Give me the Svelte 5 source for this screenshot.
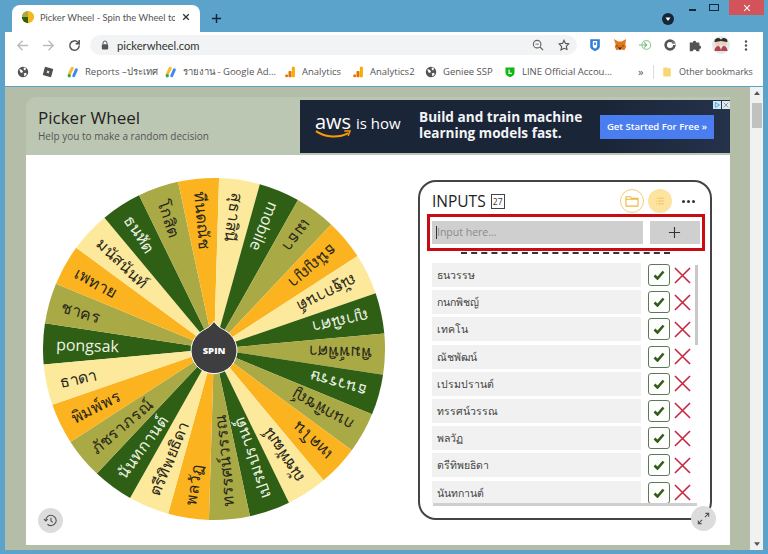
<script>
  const cx = 171, cy = 171, R = 171;
  const colors = { d: '#2f5f14', o: '#a9a945', y: '#fbb41f', p: '#fde99b' };
  const names = [
    ['pongsak','d'],['ชาคร','o'],['เพทาย','y'],['มนัสนันท์','p'],['ธนหัต','d'],['โกสิต','o'],['ทีนดณัช','y'],['สุธาสินี','p'],
    ['mobile','d'],['เมธา','o'],['ธนัญญา','y'],['ณัฐกานต์','p'],['ญาณิศา','d'],['พิมพ์พิศา','o'],['ธนวรรษ','d'],['กนกพิชญ์','o'],
    ['เทคโน','y'],['ณัชพัฒน์','p'],['เปรมปรานต์','d'],['ทรรศน์วรรณ','o'],['พลวัฏ','y'],['ตรีทิพยธิดา','p'],['นันทกานต์','d'],
    ['ภัชราภรณ์','o'],['พิมพ์พร','y'],['ธาดา','p']
  ];
  const step = 360 / names.length, start = 1.7;
  const pt = (deg) => {
    const a = (deg * Math.PI) / 180;
    return [cx - R * Math.cos(a), cy - R * Math.sin(a)];
  };
  const wedges = names.map(([label, c], i) => {
    const mid = start + i * step;
    const [x1, y1] = pt(mid - step / 2);
    const [x2, y2] = pt(mid + step / 2);
    return { label, mid, fill: colors[c], text: c === 'd' ? '#eef3e6' : '#26261a',
      d: `M${cx} ${cy}L${x1.toFixed(2)} ${y1.toFixed(2)}A${R} ${R} 0 0 1 ${x2.toFixed(2)} ${y2.toFixed(2)}Z` };
  });
  const rows = ['ธนวรรษ','กนกพิชญ์','เทคโน','ณัชพัฒน์','เปรมปรานต์','ทรรศน์วรรณ','พลวัฏ','ตรีทิพยธิดา','นันทกานต์'];
</script>

{#snippet ads()}
  <svg class="bmi" viewBox="0 0 16 16"><path d="M7 3 3 11" stroke="#f4bd2b" stroke-width="4" stroke-linecap="round"/><path d="M12.500 5 9 13" stroke="#4285f4" stroke-width="4" stroke-linecap="round"/><circle cx="3" cy="13" r="2.200" fill="#34a853"/></svg>
{/snippet}
{#snippet analytics()}
  <svg class="bmi" viewBox="0 0 16 16"><rect x="10.500" y="1" width="4" height="14" rx="1" fill="#f9ab00"/><rect x="6" y="6.500" width="4" height="8.500" rx="1" fill="#e37400"/><circle cx="3.500" cy="13" r="2" fill="#e37400"/></svg>
{/snippet}
{#snippet globe()}
  <svg class="bmi" viewBox="0 0 16 16"><circle cx="8" cy="8" r="7" fill="#555"/><path d="M3 4l3 1 2 2-1 2-2 0-1-2zM9 2l3 1-1 3-2-1zM9 10l3-1 1 2-3 3z" fill="#fff"/></svg>
{/snippet}

<div class="window">
  <div class="strip">
    <div class="tab">
      <svg class="fav" viewBox="0 0 16 16"><circle cx="8" cy="8" r="7" fill="#f5b920"/><path d="M8 8 1 8a7 7 0 0 0 7 7z" fill="#2f5f14"/><path d="M8 8V1a7 7 0 0 0-7 7z" fill="#a9a945"/></svg>
      <span class="tabtitle">Picker Wheel - Spin the Wheel to</span>
      <svg class="tabx" viewBox="0 0 10 10"><path d="M1.500 1.500l7 7M8.500 1.500l-7 7" stroke="#333" stroke-width="1.600"/></svg>
    </div>
    <svg class="newtab" viewBox="0 0 12 12"><path d="M6 1v10M1 6h10" stroke="#12263a" stroke-width="1.600"/></svg>
    <div class="wincontrols">
      <svg class="badge" viewBox="0 0 12 12"><circle cx="6" cy="6" r="6" fill="#14273a"/><path d="M3.500 4.500h5L6 8z" fill="#fff"/></svg>
      <span class="min"></span>
      <span class="max"></span>
      <span class="close"><svg viewBox="0 0 10 10"><path d="M1.500 1.500l7 7M8.500 1.500l-7 7" stroke="#fff" stroke-width="1.300"/></svg></span>
    </div>
  </div>

  <div class="chrome">
    <div class="toolbar">
      <svg class="navi first" viewBox="0 0 16 16"><path d="M14 8H3M8 3 3 8l5 5" fill="none" stroke="#b8bcc0" stroke-width="1.500"/></svg>
      <svg class="navi" viewBox="0 0 16 16"><path d="M2 8h11M8 3l5 5-5 5" fill="none" stroke="#b8bcc0" stroke-width="1.500"/></svg>
      <svg class="navi" viewBox="0 0 16 16"><path d="M13 8a5 5 0 1 1-1.500-3.500L13 6V2M13 6H9.200" fill="none" stroke="#555" stroke-width="1.600"/></svg>
      <div class="url">
        <svg class="lock" viewBox="0 0 10 12"><path d="M2.500 5V3.500a2.500 2.500 0 0 1 5 0V5" fill="none" stroke="#555" stroke-width="1.200"/><rect x="1" y="5" width="8" height="6.500" rx="1" fill="#555"/></svg>
        <span class="addr">pickerwheel.com</span>
        <svg class="urlicon zoomi" viewBox="0 0 14 14"><circle cx="6" cy="6" r="4.400" fill="none" stroke="#666" stroke-width="1.300"/><path d="M9.300 9.300 13 13" stroke="#666" stroke-width="1.400"/><path d="M4 6h4" stroke="#666"/></svg>
        <svg class="urlicon star" viewBox="0 0 14 14"><path d="M7 1.500l1.700 3.600 3.900.5-2.900 2.700.8 3.900L7 10.800l-3.500 1.900.8-3.900L1.400 5.600l3.900-.5z" fill="none" stroke="#555" stroke-width="1.300"/></svg>
      </div>
      <div class="exts">
        <svg class="ext" viewBox="0 0 16 16"><path d="M2.500 1.500h11v8c0 3-3 4.500-5.500 5.500-2.500-1-5.500-2.500-5.500-5.500z" fill="#2f7fd6"/><path d="M5.500 3.500h5v5.500c0 1.500-1.500 2.500-2.500 3-1-.5-2.500-1.500-2.500-3z" fill="#fff"/><path d="M7 5h2v3H7z" fill="#2f7fd6"/></svg>
        <svg class="ext" viewBox="0 0 16 16"><path d="M1 1l5 3h4l5-3-1 6 1 3-2 4-3-1H7l-3 1-2-4 1-3z" fill="#e2761b"/><path d="M6 10l2 1 2-1-1 3H7z" fill="#2a2a2a"/><path d="M4 8l2 1-2 1zM12 8l-2 1 2 1z" fill="#5a3a1a"/></svg>
        <svg class="ext" viewBox="0 0 16 16"><circle cx="9.500" cy="8" r="5" fill="none" stroke="#9ccf9c" stroke-width="1.300"/><path d="M1 8h9M7 5l3 3-3 3" fill="none" stroke="#7cbd7c" stroke-width="1.300"/></svg>
        <svg class="ext" viewBox="0 0 16 16"><circle cx="8" cy="8" r="5" fill="none" stroke="#555" stroke-width="3"/><path d="M8 8l6-5v5z" fill="#fff"/><circle cx="12" cy="5" r="1.800" fill="#777"/></svg>
        <svg class="ext" viewBox="0 0 16 16"><path d="M2 5h3.500a2 2 0 1 1 4 0H13v3.500a2 2 0 1 1 0 4V15H9.500a2 2 0 1 0-4 0H2z" fill="#555"/></svg>
        <svg class="avatar" viewBox="0 0 18 18"><circle cx="9" cy="9" r="9" fill="#dfe8ea"/><circle cx="6" cy="7" r="3" fill="#f1cdb7"/><circle cx="12" cy="7" r="3" fill="#f1cdb7"/><path d="M3 6a3 3 0 0 1 6-1M9 5a3 3 0 0 1 6 1" fill="#2b2b2b" stroke="#2b2b2b"/><path d="M2.500 15c0-3 2-5 3.500-5s3 2 3 5zM9 15c0-3 1.500-5 3-5s3.500 2 3.500 5z" fill="#b5434d"/></svg>
        <svg class="dots" viewBox="0 0 4 16"><circle cx="2" cy="3" r="1.500" fill="#555"/><circle cx="2" cy="8" r="1.500" fill="#555"/><circle cx="2" cy="13" r="1.500" fill="#555"/></svg>
      </div>
    </div>
    <div class="bookmarks">
      <span class="bm w1">{@render globe()}</span>
      <span class="bm w2"><svg class="bmi" viewBox="0 0 16 16"><path d="M4 1l11 3-3 11L1 12z" fill="#4d4d4d"/><path d="M7 6l3 1-1 3-3-1z" fill="#ddd"/></svg></span>
      <span class="bm w3">{@render ads()}<span>Reports –ประเทศ</span></span>
      <span class="bm w4">{@render ads()}<span>รายงาน - Google Ad...</span></span>
      <span class="bm w5">{@render analytics()}<span>Analytics</span></span>
      <span class="bm w6">{@render analytics()}<span>Analytics2</span></span>
      <span class="bm w7">{@render globe()}<span>Geniee SSP</span></span>
      <span class="bm w8"><svg class="bmi" viewBox="0 0 16 16"><path d="M2 2h12v7c0 3-3 5-6 6-3-1-6-3-6-6z" fill="#12b812"/><path d="M6 4.500v6h4.500V9H7.500V4.500z" fill="#fff"/></svg><span>LINE Official Accou...</span></span>
      <span class="more">»</span>
      <span class="sep"></span>
      <span class="bm other"><svg class="bmi" viewBox="0 0 16 16"><path d="M3 2h5l1 1h4v11H3z" fill="#f7d774"/></svg><span>Other bookmarks</span></span>
    </div>
  </div>

  <div class="viewport">
    <div class="page">
      <div class="head">
        <div class="brand">
          <h1>Picker Wheel</h1>
          <p>Help you to make a random decision</p>
        </div>
        <div class="ad">
          <div class="aws">
            <span class="awsword">aws</span>
            <svg class="smile" viewBox="0 0 38 8"><path d="M1 1c10 7 24 7 33 2" fill="none" stroke="#f90" stroke-width="2"/><path d="M30 1l6 0-2 5" fill="none" stroke="#f90" stroke-width="1.500"/></svg>
          </div>
          <span class="ishow">is how</span>
          <span class="pitch">Build and train machine<br />learning models fast.</span>
          <span class="cta">Get Started For Free »</span>
          <span class="adchoices">
            <svg viewBox="0 0 10 10"><rect width="10" height="10" fill="#cfe6f5"/><path d="M3 2l5 3-5 3z" fill="none" stroke="#3a9ad9"/></svg>
            <svg viewBox="0 0 10 10"><rect width="10" height="10" fill="#e8e8e8"/><path d="M2 2l6 6M8 2l-6 6" stroke="#4a90c0"/></svg>
          </span>
        </div>
      </div>
      <div class="main">
        <div class="wheelwrap">
          <svg class="wheel" viewBox="0 0 342 342">
            {#each wedges as w}
              <path d={w.d} fill={w.fill} />
            {/each}
            {#each wedges as w}
              <text x={cx - 158} y={cy} transform={`rotate(${w.mid.toFixed(2)} ${cx} ${cy})`} fill={w.text} class="label">{w.label}</text>
            {/each}
            <path d="M171 143c3 6 9 8 12 10a23 23 0 1 1-24 0c3-2 9-4 12-10z" fill="#3e3d40" stroke="#fff" stroke-width="1" />
            <text x={cx} y={cy + 1} class="spin">SPIN</text>
          </svg>
          <button class="round history" aria-label="history">
            <svg viewBox="0 0 16 16"><path d="M3 8a5.500 5.500 0 1 1 1.800 4" fill="none" stroke="#555" stroke-width="1.200"/><path d="M1 6.500l2 2 2-2" fill="none" stroke="#555" stroke-width="1.200"/><path d="M8.500 5v3.500l2 1.500" fill="none" stroke="#555" stroke-width="1.200"/></svg>
          </button>
        </div>
        <section class="inputs">
          <div class="ptitle">
            <h2>INPUTS</h2>
            <span class="count">27</span>
            <span class="circle folder"><svg viewBox="0 0 16 14"><path d="M1 2h5l1.500 2H15v9H1zM1 5h14" fill="none" stroke="#eeb93a" stroke-width="1.300"/></svg></span>
            <span class="circle listi"><svg viewBox="0 0 12 10"><path d="M3.500 1.500H11M3.500 5H11M3.500 8.500H11M1 1.500h1M1 5h1M1 8.500h1" stroke="#eebc4c" stroke-width="1"/></svg></span>
            <span class="more3"><i></i><i></i><i></i></span>
          </div>
          <div class="redbox">
            <div class="field"><span class="caret"></span>Input here...</div>
            <div class="add"><svg viewBox="0 0 14 14"><path d="M7 1v12M1 7h12" stroke="#333" stroke-width="1.200"/></svg></div>
          </div>
          <div class="dash"></div>
          <div class="listarea">
            <div class="rows">
              {#each rows as r}
                <div class="row">
                  <span class="name">{r}</span>
                  <span class="chk"><svg viewBox="0 0 12 10"><path d="M1.500 5.500 4.500 8.500 10.500 1.500" fill="none" stroke="#2f5f14" stroke-width="2.600"/></svg></span>
                  <svg class="del" viewBox="0 0 18 18"><path d="M1 1l16 16M17 1 1 17" stroke="#c9263f" stroke-width="1.700"/></svg>
                </div>
              {/each}
            </div>
            <div class="vscroll"></div>
          </div>
          <div class="hscroll"></div>
          <button class="round expand" aria-label="expand">
            <svg viewBox="0 0 16 16"><path d="M9.500 6.500 13.500 2.500M10 2.500h3.500V6M6.500 9.500 2.500 13.500M2.500 10v3.500H6" fill="none" stroke="#555" stroke-width="1.200"/></svg>
          </button>
        </section>
      </div>
    </div>
    <div class="scrollbar">
      <svg class="sarrow" viewBox="0 0 8 5"><path d="M4 0l4 5H0z" fill="#555"/></svg>
      <div class="thumb"></div>
      <svg class="sarrow down" viewBox="0 0 8 5"><path d="M0 0h8L4 5z" fill="#555"/></svg>
    </div>
  </div>
</div>

<style>
  :global(body) { margin: 0; background: #5ba3cb; }
  .window { width: 768px; height: 554px; overflow: hidden; display: flex; flex-direction: column; font-family: "Open Sans", "Noto Sans", "DejaVu Sans", sans-serif; color: #333; }
  svg { display: block; flex: none; }

  .strip { height: 32px; display: flex; align-items: flex-end; padding-left: 12px; position: relative; flex: none; }
  .tab { width: 188px; height: 27px; background: #fff; border-radius: 8px 8px 0 0; display: flex; align-items: center; padding: 0 8px 3px 9px; box-sizing: border-box; }
  .fav { width: 14px; height: 14px; margin-right: 5px; }
  .tabtitle { font-family: Lato, "Open Sans", sans-serif; font-size: 9.400px; color: #555; flex: 1; white-space: nowrap; overflow: hidden; }
  .tabx { width: 8px; height: 8px; margin-left: 7px; margin-right: 2px; }
  .newtab { width: 11px; height: 11px; margin: 0 0 8px 11px; }
  .wincontrols { margin-left: auto; align-self: flex-start; display: flex; }
  .badge { width: 12px; height: 12px; margin: 13px 15px 0 0; }
  .min { width: 7px; height: 2px; background: #14273a; margin: 9px 13px 0 0; }
  .max { width: 8px; height: 5px; border: 1.500px solid #14273a; margin: 4px 10px 0 0; }
  .close { width: 35px; height: 15px; background: #d2545a; display: flex; align-items: center; justify-content: center; margin-right: 4px; }
  .close svg { width: 8px; height: 8px; }

  .chrome { margin: 0 5px; background: #fff; flex: none; height: 54px; }
  .toolbar { height: 26px; display: flex; align-items: center; }
  .navi { width: 15px; height: 15px; margin-right: 11px; }
  .navi.first { margin-left: 10px; }
  .url { width: 487px; height: 20px; margin-left: -3px; background: #f1f3f4; border-radius: 10px; display: flex; align-items: center; padding: 0 6px 0 11px; box-sizing: border-box; }
  .lock { width: 8px; height: 10px; margin-right: 8px; }
  .addr { font-family: Lato, "Open Sans", sans-serif; font-size: 11.200px; color: #333; flex: 1; }
  .urlicon { width: 12px; height: 12px; }
  .zoomi { margin-right: 14px; }
  .star { margin-right: 1px; }
  .exts { display: flex; align-items: center; margin-left: 11px; }
  .ext { width: 14px; height: 14px; margin-right: 11px; }
  .avatar { width: 18px; height: 18px; margin: 0 14px 0 -1px; }
  .dots { width: 4px; height: 13px; }

  .bookmarks { height: 27px; display: flex; align-items: center; padding-left: 12px; font-size: 9.500px; color: #555; white-space: nowrap; }
  .bm { display: flex; align-items: center; gap: 6px; }
  .bmi { width: 12px; height: 12px; }
  .w1 { width: 25px; } .w2 { width: 25px; } .w3 { width: 98px; } .w4 { width: 119px; } .w5 { width: 68px; } .w6 { width: 73px; } .w7 { width: 79px; } .w8 { width: 134px; }
  .more { font-size: 11px; width: 15px; color: #555; }
  .sep { width: 1px; height: 14px; background: #ddd; margin-right: 7px; }
  .other { font-size: 9px; }

  .viewport { flex: none; height: 463px; margin: 1px 5px 0; display: flex; }
  .page { width: 745px; height: 463px; background: #b3bda8; padding: 10px 21px 0; box-sizing: border-box; }
  .head { height: 58px; display: flex; background: #bcc7b3; border-radius: 10px 0 0 0; width: 704px; padding: 3px 0 2px; box-sizing: border-box; }
  .brand { width: 274px; padding: 8px 0 0 12px; box-sizing: border-box; }
  h1 { font-size: 17px; font-weight: 400; line-height: 20px; margin: 0; color: #222; }
  .brand p { margin: 2px 0 0; font-size: 10px; line-height: 13px; color: #555; }
  .ad { width: 430px; height: 53px; background: linear-gradient(90deg, #1b2538 70%, #24324a); display: flex; align-items: center; position: relative; color: #fff; }
  .aws { margin-left: 15px; width: 38px; margin-top: -4px; }
  .awsword { font-size: 20px; line-height: 20px; display: block; }
  .smile { width: 37px; height: 8px; margin-top: -2px; }
  .ishow { font-size: 15px; margin-left: 3px; width: 63px; margin-top: -8px; }
  .pitch { font-size: 13.600px; font-weight: 700; line-height: 16px; width: 181px; margin-top: -4px; white-space: nowrap; color: #f3f4f6; }
  .cta { width: 114px; height: 24px; background: #4a7ef0; font-size: 9.500px; font-weight: 600; line-height: 24px; text-align: center; white-space: nowrap; }
  .adchoices { position: absolute; top: 1px; right: 0; display: flex; gap: 1px; }
  .adchoices svg { width: 8px; height: 8px; }

  .main { width: 704px; height: 390px; background: #fff; display: flex; }
  .wheelwrap { width: 392px; position: relative; padding: 23px 0 0 17px; box-sizing: border-box; }
  .wheel { width: 342px; height: 342px; }
  .label { font-family: "Open Sans", "Noto Sans", sans-serif; font-size: 16px; dominant-baseline: central; }
  .spin { font-family: "Open Sans", sans-serif; font-size: 9.500px; font-weight: 800; fill: #fff; text-anchor: middle; dominant-baseline: central; }
  .round { position: absolute; width: 25px; height: 25px; border-radius: 50%; background: #dcdcdc; border: 0; padding: 0; display: flex; align-items: center; justify-content: center; }
  .round svg { width: 15px; height: 15px; }
  .history { left: 12px; top: 353px; }

  .inputs { margin-top: 25px; width: 294px; height: 340px; border: 2px solid #444; border-radius: 18px; box-sizing: border-box; position: relative; }
  .ptitle { height: 32px; display: flex; align-items: center; padding: 6px 0 0 12px; box-sizing: border-box; }
  h2 { margin: 0; font-size: 15.500px; font-weight: 400; color: #222; }
  .count { margin-left: 5px; width: 12px; height: 13px; border: 1px solid #444; font-size: 8.500px; line-height: 13px; text-align: center; }
  .circle { width: 24px; height: 24px; border-radius: 50%; display: flex; align-items: center; justify-content: center; box-sizing: border-box; }
  .folder { margin-left: 115px; border: 1px solid #f2cf78; }
  .folder svg { width: 14px; height: 12px; }
  .listi { margin-left: 4px; background: #fde3a0; }
  .listi svg { width: 10px; height: 8px; }
  .more3 { display: flex; gap: 2px; margin-left: 10px; }
  .more3 i { width: 3px; height: 3px; border-radius: 50%; background: #333; }
  .redbox { margin-left: 7px; width: 278px; height: 37px; border: 3px solid #c90c12; box-sizing: border-box; display: flex; align-items: center; padding: 0 2.500px 0 2px; gap: 7px; }
  .field { width: 211px; height: 23px; background: #cfcfcf; font-size: 10.500px; line-height: 23px; color: #8a8a8a; padding-left: 4px; box-sizing: border-box; display: flex; align-items: center; }
  .caret { width: 1px; height: 13px; background: #333; }
  .add { width: 50px; height: 23px; background: #cfcfcf; display: flex; align-items: center; justify-content: center; }
  .add svg { width: 13px; height: 13px; }
  .dash { margin: 1px 0 0 41px; width: 209px; height: 0; border-top: 2px dashed #333; }
  .listarea { margin: 9px 0 0 12px; height: 240px; display: flex; overflow: hidden; }
  .rows { width: 263px; display: flex; flex-direction: column; gap: 3.200px; }
  .row { height: 24px; flex: none; display: flex; align-items: center; }
  .name { width: 209px; height: 24px; background: #f1f1f1; font-size: 10.500px; line-height: 24px; color: #444; padding-left: 5px; box-sizing: border-box; }
  .chk { width: 22px; height: 22px; border: 1.200px solid #5a7a55; border-radius: 3px; margin-left: 7px; display: flex; align-items: center; justify-content: center; box-sizing: border-box; }
  .chk svg { width: 12px; height: 10px; }
  .del { width: 17px; height: 17px; margin-left: 4px; }
  .vscroll { width: 3px; height: 80px; background: #c8c8c8; margin-top: 2px; }
  .hscroll { margin: 0 0 0 13px; width: 264px; height: 3px; background: #cfcfcf; }
  .expand { right: -6px; bottom: -13px; }

  .scrollbar { width: 13px; height: 463px; background: #f1f1f1; display: flex; flex-direction: column; align-items: center; padding: 4px 0; box-sizing: border-box; }
  .sarrow { width: 6px; height: 4px; }
  .thumb { width: 10px; height: 25px; background: #c1c1c1; margin-top: 8px; }
  .sarrow.down { margin-top: auto; }
</style>
